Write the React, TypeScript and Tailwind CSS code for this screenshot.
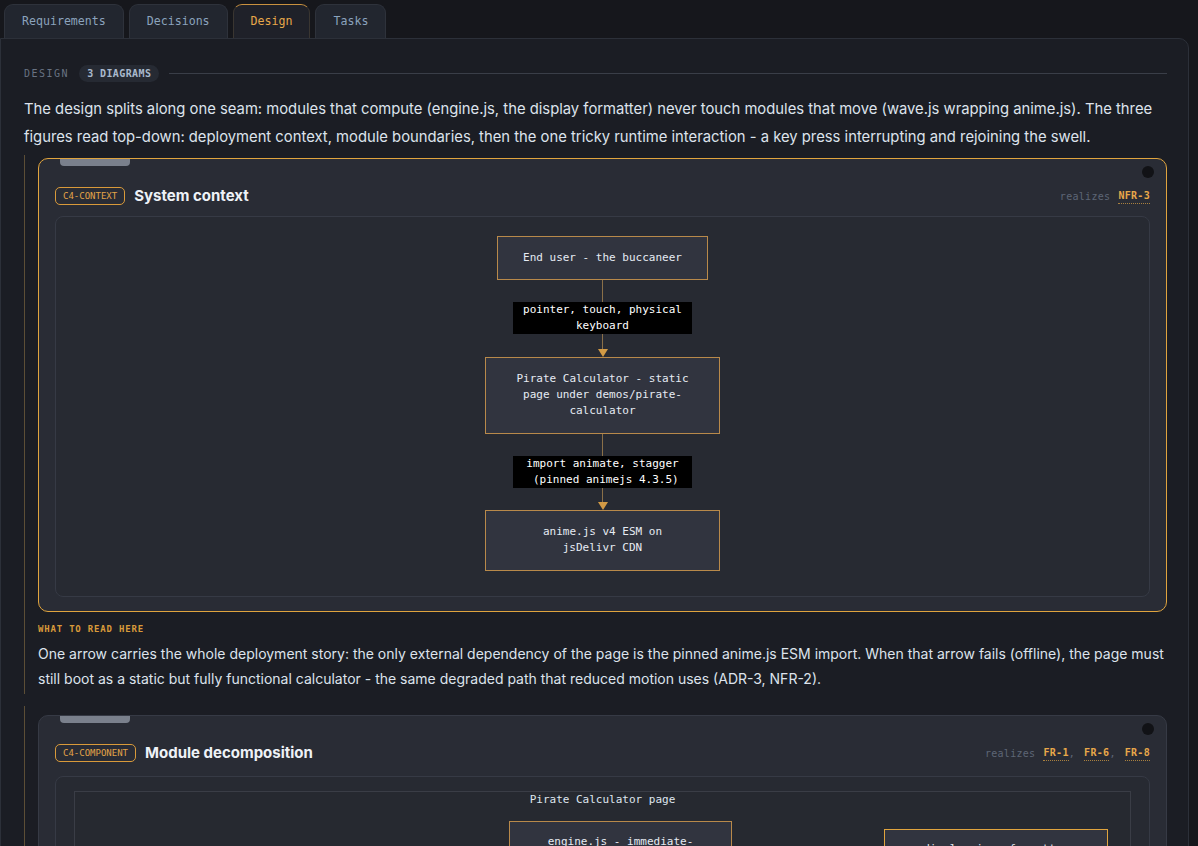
import React from "react";

const mono = "font-['DejaVu_Sans_Mono','Liberation_Mono',monospace]";
const sans = "font-['Inter','Noto_Sans',sans-serif]";

const tabs = ["Requirements", "Decisions", "Design", "Tasks"];

const Arrow = () => (
  <svg width="10" height="8" viewBox="0 0 10 8" className="block">
    <path d="M0 0 L10 0 L5 8 Z" fill="#d29a45" />
  </svg>
);

const Node = ({ lines, w, h }: { lines: string[]; w: number; h: number }) => (
  <div
    className={`flex flex-col items-center justify-center border border-[#b8894a] bg-[#31343f] text-[11px] leading-4 text-[#e6ebf3] ${mono}`}
    style={{ width: w, height: h }}
  >
    {lines.map((l) => (
      <span key={l} className="whitespace-pre">
        {l}
      </span>
    ))}
  </div>
);

const Edge = ({ lines, top, bottom }: { lines: string[]; top: number; bottom: number }) => (
  <div className="flex flex-col items-center">
    <div className="w-px bg-[#8b7048]" style={{ height: top }} />
    <div className={`flex w-[179px] flex-col items-center bg-black text-[11px] leading-4 text-white ${mono}`}>
      {lines.map((l) => (
        <span key={l} className="whitespace-pre">
          {l}
        </span>
      ))}
    </div>
    <div className="w-px bg-[#8b7048]" style={{ height: bottom }} />
    <Arrow />
  </div>
);

const Realizes = ({ ids }: { ids: string[] }) => (
  <div className={`flex items-center text-[10px] tracking-[0.03em] text-[#5d6675] ${mono}`}>
    <span className="mr-2">realizes</span>
    {ids.map((id, i) => (
      <span key={id} className="flex items-center">
        <span className="border-b border-dotted border-[#a9803f] font-bold text-[#e8a84a]">{id}</span>
        {i < ids.length - 1 && <span className="mr-[9px]">,</span>}
      </span>
    ))}
  </div>
);

const CardHeader = ({ kind, title, ids }: { kind: string; title: string; ids: string[] }) => (
  <div className="flex items-center justify-between">
    <div className="flex items-center gap-[9px]">
      <span
        className={`flex h-[18px] items-center rounded-[5px] border border-[#d99a3a] px-[7px] text-[9px] text-[#e3a448] ${mono}`}
      >
        {kind}
      </span>
      <span className={`text-[15px] font-bold text-[#eef2f7] ${sans}`}>{title}</span>
    </div>
    <Realizes ids={ids} />
  </div>
);

const Card = ({ active, children }: { active?: boolean; children: React.ReactNode }) => (
  <div
    className={`relative rounded-[10px] border bg-[#292c35] px-4 ${
      active ? "border-[#e0a43e]" : "border-[#363a45]"
    }`}
  >
    <div className="absolute left-[21px] top-0 h-[7px] w-[70px] rounded-b-[4px] bg-[#7a808c]" />
    <div className="absolute right-[12px] top-[7px] h-[12px] w-[12px] rounded-full bg-[#111216]" />
    {children}
  </div>
);

export default function App() {
  return (
    <div className={`h-[846px] overflow-hidden bg-[#16171c] ${sans}`}>
      {/* tabs */}
      <div className="flex gap-[5px] pl-1 pt-1">
        {tabs.map((t) => {
          const active = t === "Design";
          return (
            <div
              key={t}
              className={`flex h-[34px] items-center rounded-t-[9px] border border-b-0 px-[17px] text-[11.6px] ${mono} ${
                active
                  ? "relative z-10 -mb-px border-[#3a3631] border-t-[#c9913f] bg-[#1f2129] text-[#e8a84a]"
                  : "border-[#2e323b] bg-[#22262f] text-[#8ba3bd]"
              }`}
            >
              {t}
            </div>
          );
        })}
      </div>

      {/* panel */}
      <div className="mr-[9px] h-[900px] rounded-tr-[10px] border border-[#2c3039] bg-[#1b1d24] pl-[23px] pr-[21px] pt-[26px]">
        <div className="flex items-center">
          <span className={`text-[10px] tracking-[0.15em] text-[#687282] ${mono}`}>DESIGN</span>
          <span
            className={`ml-[10px] flex h-[17px] items-center rounded-full bg-[#262a33] px-[8px] text-[10px] font-bold tracking-[0.04em] text-[#a9b9cd] ${mono}`}
          >
            3 DIAGRAMS
          </span>
          <div className="ml-[10px] h-px flex-1 bg-[#3a3e48]" />
        </div>

        <p className="mt-[13px] text-[14.8px] leading-[28px] text-[#dde3ec]">
          The design splits along one seam: modules that compute (engine.js, the display formatter) never touch
          modules that move (wave.js wrapping anime.js). The three figures read top-down: deployment context, module
          boundaries, then the one tricky runtime interaction - a key press interrupting and rejoining the swell.
        </p>

        {/* figure 1 */}
        <div className="mt-[4px] border-l border-[#5c4e36] pb-[3px] pl-[13px] pt-[3px]">
          <Card active>
            <div className="pb-[14px] pt-[26px]">
              <CardHeader kind="C4-CONTEXT" title="System context" ids={["NFR-3"]} />
              <div className="mt-[8px] flex flex-col items-center rounded-[8px] border border-[#363a45] bg-[#272a32] pb-[25px] pt-[19px]">
                <Node w={211} h={44} lines={["End user - the buccaneer"]} />
                <Edge top={22} bottom={15} lines={["pointer, touch, physical", "keyboard"]} />
                <Node w={235} h={77} lines={["Pirate Calculator - static", "page under demos/pirate-", "calculator"]} />
                <Edge top={22} bottom={14} lines={["import animate, stagger", " (pinned animejs 4.3.5)"]} />
                <Node w={235} h={61} lines={["anime.js v4 ESM on", "jsDelivr CDN"]} />
              </div>
            </div>
          </Card>
          <div className={`mt-[11px] text-[9px] font-bold tracking-[0.09em] text-[#d99a3a] ${mono}`}>
            WHAT TO READ HERE
          </div>
          <p className="mt-[5px] text-[14px] leading-[25px] text-[#dde3ec]">
            One arrow carries the whole deployment story: the only external dependency of the page is the pinned
            anime.js ESM import. When that arrow fails (offline), the page must still boot as a static but fully
            functional calculator - the same degraded path that reduced motion uses (ADR-3, NFR-2).
          </p>
        </div>

        {/* figure 2 */}
        <div className="mt-[12px] border-l border-[#5c4e36] pl-[13px] pt-[9px]">
          <Card>
            <div className="pb-[14px] pt-[26px]">
              <CardHeader kind="C4-COMPONENT" title="Module decomposition" ids={["FR-1", "FR-6", "FR-8"]} />
              <div className="mt-[11px] rounded-[8px] border border-[#363a45] bg-[#272a32] px-[18px] pt-[14px]">
                <div className="relative h-[300px] border border-[#3a3d46] bg-[#262930]">
                  <div className={`text-center text-[11px] leading-4 text-[#dfe5ee] ${mono}`}>
                    Pirate Calculator page
                  </div>
                  <div
                    className={`absolute left-[434px] top-[29px] flex h-[90px] w-[223px] justify-center border border-[#b8894a] bg-[#31343f] pt-[12px] text-[11px] leading-4 text-[#e6ebf3] ${mono}`}
                  >
                    engine.js - immediate-
                  </div>
                  <div
                    className={`absolute left-[809px] top-[37px] flex h-[90px] w-[224px] justify-center border border-[#e0a43e] bg-[#31343f] pt-[11px] text-[11px] leading-4 text-[#e6ebf3] ${mono}`}
                  >
                    display.js - formatter
                  </div>
                </div>
              </div>
            </div>
          </Card>
        </div>
      </div>
    </div>
  );
}
